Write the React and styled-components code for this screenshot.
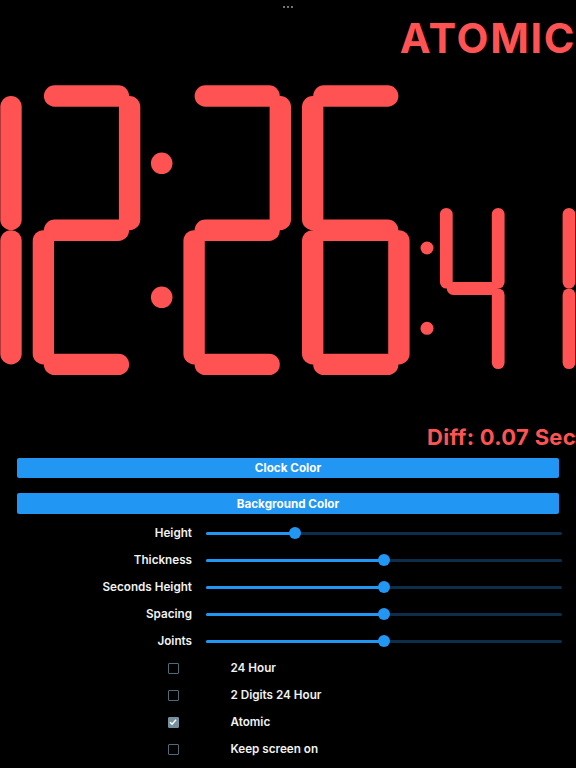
import React from "react";
import styled, { createGlobalStyle } from "styled-components";

const RED = "#ff5252";
const BLUE = "#2196f3";
const FONT = `Inter, "Noto Sans", "Liberation Sans", sans-serif`;

const Global = createGlobalStyle`
  html, body { margin: 0; padding: 0; background: #000; }
  body { width: 576px; height: 768px; overflow: hidden; font-family: ${FONT}; }
`;

const Page = styled.div`
  width: 576px;
  height: 768px;
  overflow: hidden;
  background: #000;
  display: flex;
  flex-direction: column;
`;

const Handle = styled.div`
  height: 14px;
  display: flex;
  justify-content: center;
  align-items: center;
  gap: 1.3px;
`;
const HandleDot = styled.span`
  width: 2.8px;
  height: 2.8px;
  border-radius: 50%;
  background: #9a9a9a;
`;

const Brand = styled.div`
  box-sizing: border-box;
  height: 50px;
  padding-bottom: 2px;
  display: flex;
  justify-content: flex-end;
  align-items: center;
  white-space: nowrap;
  color: ${RED};
  font-size: 41.5px;
  font-weight: 700;
  letter-spacing: 1.6px;
`;

const ClockFace = styled.svg`
  display: block;
  width: 576px;
  height: 356px;
  flex: none;
`;

const Diff = styled.div`
  box-sizing: border-box;
  height: 38px;
  padding-bottom: 5px;
  display: flex;
  justify-content: flex-end;
  align-items: center;
  white-space: nowrap;
  color: ${RED};
  font-size: 22px;
  font-weight: 700;
  letter-spacing: 0.3px;
`;

const Buttons = styled.div`
  display: flex;
  flex-direction: column;
  gap: 15px;
  padding: 0 17px;
  margin-bottom: 6px;
`;
const ColorButton = styled.div`
  height: 20.4px;
  border-radius: 2px;
  background: ${BLUE};
  color: #fff;
  font-size: 11.7px;
  font-weight: 700;
  display: flex;
  align-items: center;
  justify-content: center;
`;

const SliderRow = styled.div`
  height: 27px;
  display: grid;
  grid-template-columns: 192px 356px;
  column-gap: 14px;
  align-items: center;
`;
const SliderLabel = styled.div`
  color: #f2f2f2;
  font-size: 11.7px;
  font-weight: 600;
  text-align: right;
`;
const Track = styled.div`
  position: relative;
  height: 3px;
  border-radius: 2px;
  background: #0c2e4b;
`;
const TrackFill = styled.div`
  height: 100%;
  border-radius: 2px;
  background: ${BLUE};
`;
const Thumb = styled.span`
  position: absolute;
  top: -4.5px;
  width: 12px;
  height: 12px;
  margin-left: -6px;
  border-radius: 50%;
  background: ${BLUE};
`;

const CheckRow = styled.div`
  height: 27px;
  display: grid;
  grid-template-columns: 168px 10.5px 1fr;
  align-items: center;
`;
const Box = styled.span`
  grid-column: 2;
  box-sizing: border-box;
  width: 10.5px;
  height: 10.5px;
  border-radius: 1px;
  border: 1.4px solid ${(p) => (p.$checked ? "#74909f" : "#4f6a79")};
  background: ${(p) => (p.$checked ? "#74909f" : "transparent")};
  display: flex;
  align-items: center;
  justify-content: center;
`;
const CheckLabel = styled.span`
  grid-column: 3;
  padding-left: 52px;
  color: #f2f2f2;
  font-size: 11.7px;
  font-weight: 600;
`;

/* seven-segment data: a top, b upper right, c lower right, d middle, e lower left, f upper left, g bottom */
const SEGMENTS = {
  1: ["b", "c"],
  2: ["a", "b", "d", "e", "g"],
  4: ["f", "b", "d", "c"],
  6: ["a", "f", "d", "e", "c", "g"],
};

function Digit({ value, x, y, w, h, t }) {
  const half = t / 2;
  const r = x + w;
  const m = y + h / 2;
  const b = y + h;
  const hx1 = x + half + 0.5;
  const hx2 = r - half - 0.5;
  const lines = {
    a: [hx1, y, hx2, y],
    d: [hx1, m, hx2, m],
    g: [hx1, b, hx2, b],
    f: [x, y + half, x, m - half],
    b: [r, y + half, r, m - half],
    e: [x, m + half, x, b - half],
    c: [r, m + half, r, b - half],
  };
  return (
    <g stroke={RED} strokeWidth={t} strokeLinecap="round">
      {SEGMENTS[value].map((s) => {
        const [x1, y1, x2, y2] = lines[s];
        return <line key={s} x1={x1} y1={y1} x2={x2} y2={y2} />;
      })}
    </g>
  );
}

const TOP = 64; // y of the drawing's top edge on the page

function Clock() {
  const large = { y: 96 - TOP, w: 86.2, h: 268.4, t: 21.4 };
  const small = { y: 208 - TOP, w: 51.9, h: 161, t: 12.8 };
  return (
    <ClockFace viewBox="0 0 576 356">
      <Digit value={1} x={-75.2} {...large} />
      <Digit value={2} x={43.4} {...large} />
      <circle cx={161.7} cy={163.3 - TOP} r={10.8} fill={RED} />
      <circle cx={161.7} cy={297.3 - TOP} r={10.8} fill={RED} />
      <Digit value={2} x={194.1} {...large} />
      <Digit value={6} x={312.7} {...large} />
      <circle cx={427} cy={248 - TOP} r={6.5} fill={RED} />
      <circle cx={427} cy={328.3 - TOP} r={6.5} fill={RED} />
      <Digit value={4} x={446.3} {...small} />
      <Digit value={1} x={517.1} {...small} />
    </ClockFace>
  );
}

const SLIDERS = [
  { label: "Height", at: 25 },
  { label: "Thickness", at: 50 },
  { label: "Seconds Height", at: 50 },
  { label: "Spacing", at: 50 },
  { label: "Joints", at: 50 },
];

const OPTIONS = [
  { label: "24 Hour" },
  { label: "2 Digits 24 Hour" },
  { label: "Atomic", checked: true },
  { label: "Keep screen on" },
];

export default function App() {
  return (
    <Page>
      <Global />
      <Handle>
        <HandleDot />
        <HandleDot />
        <HandleDot />
      </Handle>
      <Brand>ATOMIC</Brand>
      <Clock />
      <Diff>Diff: 0.07 Sec</Diff>
      <Buttons>
        <ColorButton>Clock Color</ColorButton>
        <ColorButton>Background Color</ColorButton>
      </Buttons>
      {SLIDERS.map((s) => (
        <SliderRow key={s.label}>
          <SliderLabel>{s.label}</SliderLabel>
          <Track>
            <TrackFill style={{ width: `${s.at}%` }} />
            <Thumb style={{ left: `${s.at}%` }} />
          </Track>
        </SliderRow>
      ))}
      {OPTIONS.map((o) => (
        <CheckRow key={o.label}>
          <Box $checked={o.checked}>
            {o.checked && (
              <svg width="8" height="8" viewBox="0 0 8 8" fill="none">
                <path d="M1 4.2 L3.1 6.2 L7 1.8" stroke="#fff" strokeWidth="1.4" />
              </svg>
            )}
          </Box>
          <CheckLabel>{o.label}</CheckLabel>
        </CheckRow>
      ))}
    </Page>
  );
}
